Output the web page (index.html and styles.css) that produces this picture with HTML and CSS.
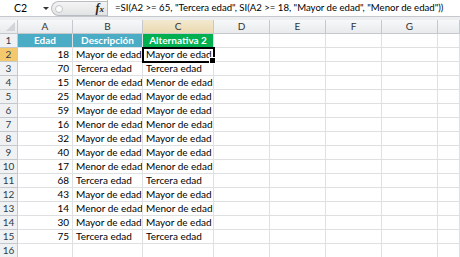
FILE: index.html
```html
<!DOCTYPE html>
<html lang="es">
<head>
    <meta charset="UTF-8">
    <title>Alternativa 2 - SI anidado</title>
    <link rel="stylesheet" href="styles.css">
</head>
<body>

    <!-- Formula bar -->
    <div class="formula-bar">
        <div class="name-box"><span>C2</span><span class="arrow"></span></div>
        <div class="fx-box">
            <div class="pill">
                <span class="knob"></span>
                <span class="fx"><i>f</i><i class="x">x</i></span>
            </div>
        </div>
        <div class="formula">=SI(A2 &gt;= 65, "Tercera edad", SI(A2 &gt;= 18, "Mayor de edad", "Menor de edad"))</div>
    </div>

    <!-- Sheet grid -->
    <table class="sheet">
        <colgroup>
            <col style="width:18px"><col style="width:55px"><col style="width:70px"><col style="width:71px">
            <col style="width:56px"><col style="width:56px"><col style="width:56px"><col style="width:56px"><col style="width:22px">
        </colgroup>
        <thead>
            <tr>
                <th class="corner"><span class="tri"></span></th>
                <th>A</th><th>B</th><th class="sel">C</th><th>D</th><th>E</th><th>F</th><th>G</th><th></th>
            </tr>
        </thead>
        <tbody>
            <tr>
                <th>1</th>
                <td class="title teal">Edad</td><td class="title teal">Descripción</td><td class="title green">Alternativa 2</td>
                <td></td><td></td><td></td><td></td><td></td>
            </tr>
            <tr>
                <th class="sel">2</th>
                <td class="num">18</td><td>Mayor de edad</td><td class="active">Mayor de edad</td>
                <td></td><td></td><td></td><td></td><td></td>
            </tr>
            <tr>
                <th>3</th>
                <td class="num">70</td><td>Tercera edad</td><td>Tercera edad</td>
                <td></td><td></td><td></td><td></td><td></td>
            </tr>
            <tr>
                <th>4</th>
                <td class="num">15</td><td>Menor de edad</td><td>Menor de edad</td>
                <td></td><td></td><td></td><td></td><td></td>
            </tr>
            <tr>
                <th>5</th>
                <td class="num">25</td><td>Mayor de edad</td><td>Mayor de edad</td>
                <td></td><td></td><td></td><td></td><td></td>
            </tr>
            <tr>
                <th>6</th>
                <td class="num">59</td><td>Mayor de edad</td><td>Mayor de edad</td>
                <td></td><td></td><td></td><td></td><td></td>
            </tr>
            <tr>
                <th>7</th>
                <td class="num">16</td><td>Menor de edad</td><td>Menor de edad</td>
                <td></td><td></td><td></td><td></td><td></td>
            </tr>
            <tr>
                <th>8</th>
                <td class="num">32</td><td>Mayor de edad</td><td>Mayor de edad</td>
                <td></td><td></td><td></td><td></td><td></td>
            </tr>
            <tr>
                <th>9</th>
                <td class="num">40</td><td>Mayor de edad</td><td>Mayor de edad</td>
                <td></td><td></td><td></td><td></td><td></td>
            </tr>
            <tr>
                <th>10</th>
                <td class="num">17</td><td>Menor de edad</td><td>Menor de edad</td>
                <td></td><td></td><td></td><td></td><td></td>
            </tr>
            <tr>
                <th>11</th>
                <td class="num">68</td><td>Tercera edad</td><td>Tercera edad</td>
                <td></td><td></td><td></td><td></td><td></td>
            </tr>
            <tr>
                <th>12</th>
                <td class="num">43</td><td>Mayor de edad</td><td>Mayor de edad</td>
                <td></td><td></td><td></td><td></td><td></td>
            </tr>
            <tr>
                <th>13</th>
                <td class="num">14</td><td>Menor de edad</td><td>Menor de edad</td>
                <td></td><td></td><td></td><td></td><td></td>
            </tr>
            <tr>
                <th>14</th>
                <td class="num">30</td><td>Mayor de edad</td><td>Mayor de edad</td>
                <td></td><td></td><td></td><td></td><td></td>
            </tr>
            <tr>
                <th>15</th>
                <td class="num">75</td><td>Tercera edad</td><td>Tercera edad</td>
                <td></td><td></td><td></td><td></td><td></td>
            </tr>
            <tr>
                <th>16</th>
                <td></td><td></td><td></td>
                <td></td><td></td><td></td><td></td><td></td>
            </tr>
        </tbody>
    </table>

</body>
</html>
```

FILE: styles.css
```css
:root {
    --grid: #dfe0e1;
    --head-line: #c5c8cc;
    --head-bg: #f0f1f2;
    --head-text: #2f3b4c;
    --teal: #4bacc6;
    --green: #00b050;
    --sel-row: #f4c96e;
}

* {
    margin: 0;
    padding: 0;
    box-sizing: border-box;
}

body {
    width: 460px;
    height: 257px;
    overflow: hidden;
    background: #fff;
    font-family: Lato, 'Liberation Sans', sans-serif;
    font-size: 10px;
    color: #000;
}

/* Formula bar */

.formula-bar {
    display: flex;
    height: 20px;
    background: #eceef0;
    padding-bottom: 3px;
}

.name-box {
    width: 50px;
    display: flex;
    align-items: center;
    padding-left: 14px;
    background: #fff;
    font-size: 10.5px;
    border-bottom: 1px solid var(--head-line);
}

.arrow {
    margin-left: 16px;
    border-left: 3px solid transparent;
    border-right: 3px solid transparent;
    border-top: 3px solid #333;
}

.fx-box {
    width: 57px;
    background: #fff;
    padding: 1px 0 0 1px;
    border-bottom: 1px solid var(--head-line);
}

.pill {
    height: 15px;
    display: flex;
    align-items: center;
    background: linear-gradient(#f4f4f4, #e2e3e4);
    border: 1px solid #b9bcc0;
    border-right: none;
    border-radius: 8px 0 0 8px;
}

.knob {
    width: 8px;
    height: 8px;
    margin-left: 3px;
    border-radius: 50%;
    border: 1px solid #c3c5c8;
    background: #fbfbfb;
}

.fx {
    margin-left: auto;
    margin-right: 3px;
    font-family: 'Liberation Serif', serif;
    font-weight: bold;
    font-size: 12px;
    color: #222;
}

.fx .x {
    font-size: 9px;
}

.formula {
    flex: 1;
    background: #fff;
    border-left: 1px solid #b9bcc0;
    border-bottom: 1px solid var(--head-line);
    padding-left: 7px;
    font-size: 9.6px;
    line-height: 16px;
    white-space: nowrap;
    overflow: hidden;
}

/* Sheet */

.sheet {
    width: 460px;
    table-layout: fixed;
    border-collapse: separate;
    border-spacing: 0;
}

.sheet th,
.sheet td {
    height: 14px;
    padding: 0 3px;
    line-height: 13px;
    white-space: nowrap;
    overflow: hidden;
    border-right: 1px solid var(--grid);
    border-bottom: 1px solid var(--grid);
}

.sheet th {
    font-weight: normal;
    font-size: 10px;
    text-align: center;
    color: var(--head-text);
    background: var(--head-bg);
    border-color: var(--head-line);
    padding: 0;
}

.sheet thead th {
    background: linear-gradient(#f7f8f9, #e9eaec);
    color: #333;
}

.sheet th.sel {
    background: var(--sel-row);
}

.sheet thead th.sel {
    background: linear-gradient(#f3e9d0, #ead9b0);
}

.corner {
    position: relative;
}

.tri {
    position: absolute;
    right: 2px;
    bottom: 2px;
    border-left: 9px solid transparent;
    border-bottom: 9px solid #d2d4d7;
}

.num {
    text-align: right;
}

.title {
    color: #fff;
    font-weight: bold;
    text-align: center;
}

.teal {
    background: var(--teal);
}

.green {
    background: var(--green);
}

.sheet td.active {
    position: relative;
    overflow: visible;
    outline: 2px solid #000;
    outline-offset: -1px;
    box-shadow: 0 -1px 0 #9a3b78;
}

.active::after {
    content: '';
    position: absolute;
    right: -3px;
    bottom: -3px;
    width: 5px;
    height: 5px;
    background: #000;
    border: 1px solid #fff;
}
```
